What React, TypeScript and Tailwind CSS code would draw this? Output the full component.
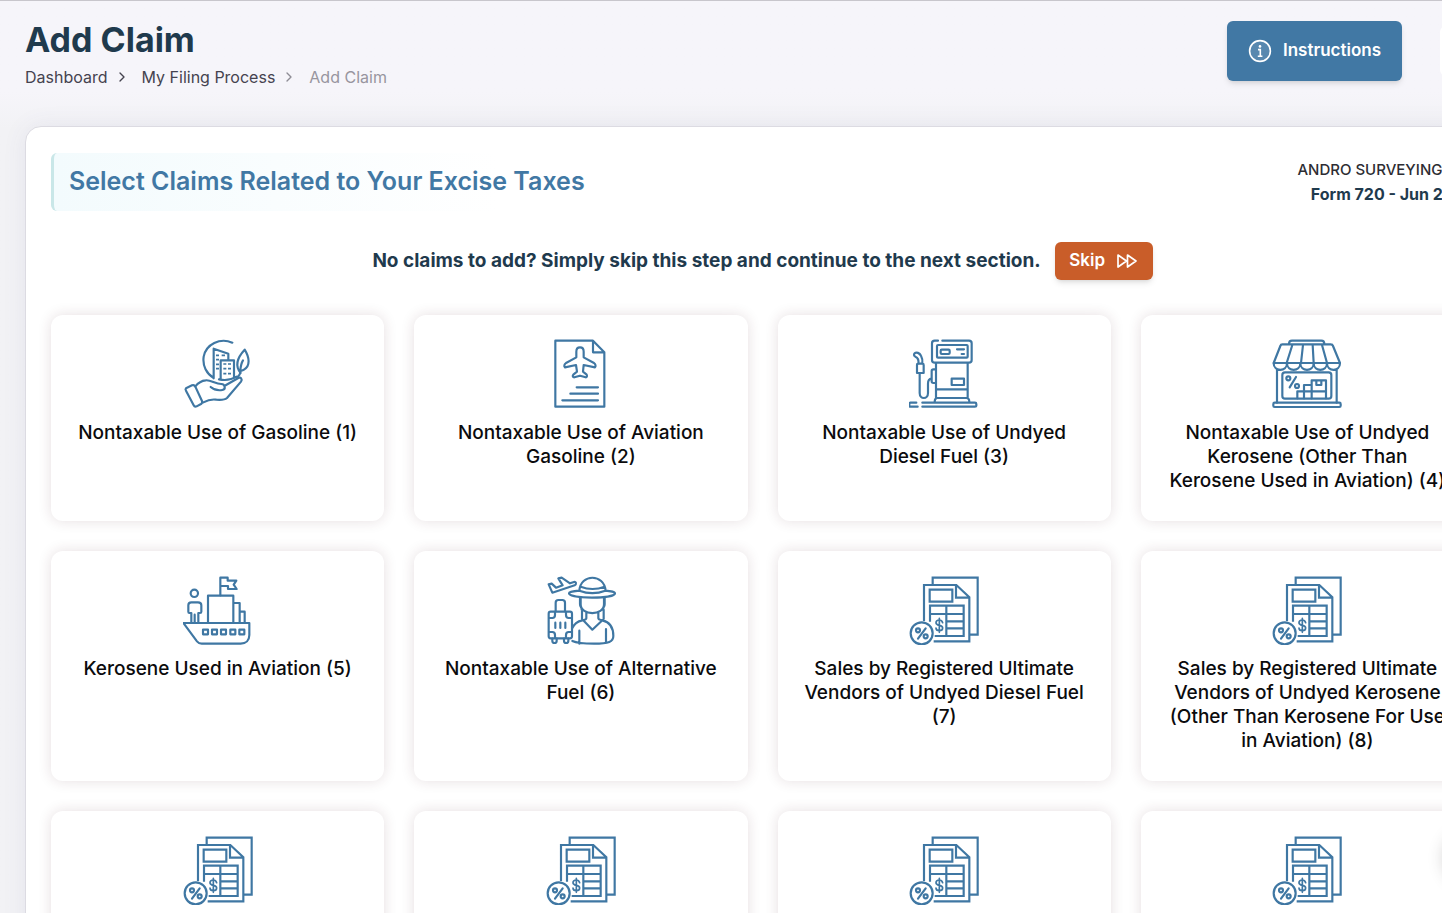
import type { ReactNode } from 'react';
import { ChevronRight } from 'lucide-react';

type Claim = {
    title: string;
    icon: ReactNode;
};

function Icon({ box, children }: { box: string; children: ReactNode }) {
    return (
        <svg
            className="w-[70px] h-[70px] shrink-0"
            viewBox={box}
            fill="none"
            stroke="#3f77a3"
            strokeWidth="6.5"
            strokeLinecap="round"
            strokeLinejoin="round"
            aria-hidden="true"
        >
            {children}
        </svg>
    );
}

const GasolineIcon = (
    <Icon box="39 42 210 210">
        <path d="M187 53C150 37 108 58 101 95c-4 28 9 52 30 64M131 160V71l44 15v16M152 163v-57h40v52M147 163c18 4 38 1 53-8" />
        <path d="M212 144c-15-18-16-40 12-70 15 24 17 49-2 60-4 3-8 3-11 2M211 136c1-12 3-22 8-30M212 138c-1 10-5 15-10 19" />
        <path strokeWidth="5" strokeLinecap="butt" d="M138 91h9M138 104h9M138 118h9M138 131h9M155 91h10M160 117h9M174 117h9M160 131h9M174 131h9M160 146h9M174 146h9" />
        <path d="M48 190l18-9c5-2 8 0 10 4l20 43c2 5 0 7-3 9l-13 7c-4 2-7 1-9-3l-23-44c-2-3-2-5 0-7z" />
        <path d="M76 184c8-10 20-17 31-18 15-2 29 11 47 11 12 1 14 16 3 18-12 2-27-2-35-9M163 183l42-24c7-4 13 4 8 11l-42 49c-7 6-19 6-32 5-14-2-24 0-39 8" />
    </Icon>
);

const AviationIcon = (
    <Icon box="33 42 210 210">
        <path d="M61 47h113l34 35v163H61zM174 48v34h33" />
        <path d="M124 97V80c0-17 22-17 22 0v17l31 17c5 4 6 10 3 13l-34-7-2 20 11 9c2 4 1 8-3 8l-17-5-17 5c-5 0-6-4-3-8l11-9-3-20-33 7c-4-3-2-9 3-13z" />
        <path d="M125 187h64M106 206h83M82 226h107" />
    </Icon>
);

const PumpIcon = (
    <Icon box="43 42 210 210">
        <path d="M130 47h-10c-5 0-8 4-8 8v50c0 5 3 8 8 8h103c5 0 8-3 8-8V55c0-5-3-8-8-8h-80" />
        <rect x="127" y="60" width="92" height="38" rx="3" />
        <rect x="138" y="74" width="27" height="13" rx="3" />
        <path d="M187 73h21M201 87h7M124 115v104M219 115v104M125 193h94M171 161h37v19h-37zM120 231c0-8 2-12 8-12h87c6 0 9 4 9 12" />
        <path d="M65 233H47c-2 0-3 2-3 4v5c0 2 1 3 3 3h22M83 233h158c2 0 4 2 4 4v5c0 2-2 3-4 3H83" />
        <path d="M123 133h-7c-4 0-5 2-5 5v31c0 3 1 5 5 5h7M111 160c-7 1-11 8-11 16v28c0 20-25 20-25 0v-60" />
        <path d="M67 144v-24c0-3 2-4 5-4h11c3 0 4 1 4 4v24zM71 116c2-11-2-18-9-21-5-3-5-7-2-10 5-5 15-1 19 7 4 7 5 15 4 24" />
    </Icon>
);

const StoreIcon = (
    <Icon box="37 42 210 210">
        <path d="M88 57c0-7 3-10 9-10h88c6 0 9 3 9 10M68 58h145c4 0 6 1 7 5l21 51H42l20-51c1-4 2-5 6-5zM98 60L81 114M130 60l-6 54M159 60l3 54M187 60l15 54" />
        <path d="M42 115c0 26 40 26 40 0 0 26 40 26 40 0 0 26 40 26 40 0 0 26 40 26 40 0 0 26 39 26 39 0M52 134v99M231 134v99" />
        <rect x="41" y="233" width="202" height="13" rx="4" />
        <rect x="68" y="142" width="147" height="79" rx="8" />
        <path d="M109 156l-19 31" />
        <circle cx="86" cy="160" r="6" />
        <circle cx="112" cy="183" r="6" />
        <path d="M113 220v-21h20v-19h23v-14h43v54M133 199v21M156 180v40M134 199h65M170 167v13h15v-13" />
    </Icon>
);

const ShipIcon = (
    <Icon box="39 30 210 210">
        <circle cx="73" cy="85" r="11" />
        <path d="M64 173v-29h-6c-2 0-3-2-3-4v-19c0-6 4-9 9-9h20c6 0 10 3 10 9v19c0 2-1 4-4 4h-5v29M74 149v24" />
        <path d="M40 174h198v36c0 16-10 26-26 26H95c-6 0-10-2-14-7zM114 172V92h76v80M191 114h18v58M209 140h15v32" />
        <path d="M151 91V38h22v9h26l-8 12 9 13h-26v-9h-20" />
        <path d="M99 194h15v14H99zM126 194h15v14h-15zM153 194h15v14h-15zM181 194h15v14h-15zM208 194h15v14h-15z" />
    </Icon>
);

const TravelIcon = (
    <Icon box="33 30 210 210">
        <path d="M41 58l9-2 13 12 20-7-13-21 10-2 25 17 12-4c7-2 8 7 2 10L52 83z" />
        <path d="M133 78c3-53 75-53 79 0M137 65c23 9 48 9 72 0M133 77c-17 1-31 5-31 8 0 17 138 17 138 0 0-3-12-7-29-8M133 77c24 9 54 9 78 0" />
        <path d="M137 98v20c0 35 70 35 70 0V98M135 98v20c0 8 5 8 5 16M209 98v20c0 8-5 8-5 16M154 142v18c0 4-6 5-12 6-17 3-25 11-31 25M190 142v18c0 4 5 5 12 6 23 5 33 22 33 47 0 17-13 23-58 23-33 0-53-2-65-8M144 165l28 29 31-29M141 134v28M206 134v28M133 236v-39M213 232v-40" />
        <rect x="41" y="140" width="70" height="80" rx="6" />
        <path d="M62 139v-26c0-5 3-8 8-8h12c5 0 8 3 8 8v26M42 159h10c6 0 8-4 8-9v-9M110 159h-9c-6 0-8-4-8-9v-9M42 201h10c6 0 8 4 8 9v9M110 201h-9c-6 0-8 4-8 9v9M61 173v16M76 173v16M91 173v16M52 221v7c0 8 13 8 13 0v-7M87 221v7c0 8 13 8 13 0v-7" />
    </Icon>
);

const TaxFormIcon = (
    <Icon box="27 30 210 210">
        <path strokeLinejoin="miter" strokeLinecap="butt" d="M98 57V38h135v171h-22M72 168V60h97l39 37v132H101M168 61v37h38M89 74h68v36H89zM90 170v-48h101v91h-87M139 122v91M90 147h100M139 169h52M139 190h52" />
        <circle cx="65" cy="205" r="33" />
        <path d="M77 190l-23 31" />
        <circle cx="54" cy="196" r="6" />
        <circle cx="77" cy="214" r="6" />
        <path strokeWidth="5" d="M128 173c-2-6-6-8-10-8-6 0-10 3-10 8 0 11 20 5 20 16 0 6-5 8-10 8-6 0-10-3-10-8M118 160v42" />
    </Icon>
);

const claims: Claim[] = [
    { title: 'Nontaxable Use of Gasoline (1)', icon: GasolineIcon },
    { title: 'Nontaxable Use of Aviation Gasoline (2)', icon: AviationIcon },
    { title: 'Nontaxable Use of Undyed Diesel Fuel (3)', icon: PumpIcon },
    { title: 'Nontaxable Use of Undyed Kerosene (Other Than Kerosene Used in Aviation) (4)', icon: StoreIcon },
    { title: 'Kerosene Used in Aviation (5)', icon: ShipIcon },
    { title: 'Nontaxable Use of Alternative Fuel (6)', icon: TravelIcon },
    { title: 'Sales by Registered Ultimate Vendors of Undyed Diesel Fuel (7)', icon: TaxFormIcon },
    { title: 'Sales by Registered Ultimate Vendors of Undyed Kerosene (Other Than Kerosene For Use in Aviation) (8)', icon: TaxFormIcon },
    { title: 'Sales by Registered Ultimate Vendors of Kerosene (9)', icon: TaxFormIcon },
    { title: 'Sales by Registered Ultimate Vendors of Gasoline (10)', icon: TaxFormIcon },
    { title: 'Sales by Registered Ultimate Vendors of Aviation Gasoline (11)', icon: TaxFormIcon },
    { title: 'Biodiesel or Renewable Diesel Mixture Credit (12)', icon: TaxFormIcon },
];

function Header() {
    return (
        <header className="flex items-start justify-between pt-5">
            <div>
                <h1 className="text-[34px] leading-[38px] font-bold text-[#1f3a4d]">Add Claim</h1>
                <nav aria-label="Breadcrumb" className="mt-1.5">
                    <ol className="flex items-center gap-1.5 text-base leading-6 text-[#45434f]">
                        <li><a href="#">Dashboard</a></li>
                        <li><ChevronRight className="size-4 mr-1.5" aria-hidden="true" /></li>
                        <li><a href="#">My Filing Process</a></li>
                        <li><ChevronRight className="size-4 mr-1.5 text-[#8e8c95]" aria-hidden="true" /></li>
                        <li className="text-[#98969f]" aria-current="page">Add Claim</li>
                    </ol>
                </nav>
            </div>
            <div className="flex items-center gap-[38px]">
                <button className="flex items-center justify-center gap-[11px] w-[175px] h-[60px] rounded-md bg-[#4178a4] text-[17px] font-semibold text-white shadow-md">
                    <svg className="size-6" viewBox="0 0 24 24" fill="none" stroke="currentColor" strokeWidth="1.6" aria-hidden="true">
                        <circle cx="12" cy="12" r="10.4" fill="#ffffff" fillOpacity="0.12" />
                        <circle cx="12" cy="7.4" r="1.3" fill="currentColor" stroke="none" />
                        <path d="M10 10.6h2.3v6.6M9.8 17.2h4.6" />
                    </svg>
                    Instructions
                </button>
                <button aria-label="Menu" className="w-[60px] h-[50px] rounded-md bg-white" />
            </div>
        </header>
    );
}

function ClaimCard({ title, icon }: Claim) {
    return (
        <button className="flex flex-col items-center justify-start px-6 pt-6 pb-7 rounded-xl bg-white text-center shadow-[0_0_14px_rgba(80,30,45,0.14)]">
            {icon}
            <span className="mt-3 text-[19px] leading-6 font-medium text-[#0b0b0d]">{title}</span>
        </button>
    );
}

export default function App() {
    return (
        <div className="h-screen overflow-hidden border-t border-[#c8c6cc] bg-linear-to-b from-[#f6f5fa] from-10% to-[#f2f2f5] to-14% font-['Inter',sans-serif]">
            {/* content runs wider than the window */}
            <div className="w-[calc(100%+58px)] pl-[25px]">
                <Header />
                <main className="mt-[37px] rounded-2xl border border-[#dcdbe2] bg-white px-[25px] pt-[26px] pb-8 shadow-[0_0_24px_rgba(80,80,140,0.08)]">
                    <div className="flex items-center justify-between">
                        <h2 className="h-[58px] flex items-center pl-[15px] pr-6 rounded-md border-l-3 border-[#c9e7e8] bg-linear-to-r from-[#f3fbfd] to-white to-80% text-[25px] font-semibold text-[#4178a4]">
                            Select Claims Related to Your Excise Taxes
                        </h2>
                        <div className="text-right leading-6">
                            <p className="text-[15px] font-medium text-[#2d2d33]">ANDRO SURVEYING LLC</p>
                            <p className="text-base font-bold text-[#1f3a4d]">Form 720 - Jun 2025</p>
                        </div>
                    </div>

                    <div className="mt-[31px] flex items-center justify-center gap-[14px]">
                        <p className="text-[19px] font-bold text-[#1f3a4d]">
                            No claims to add? Simply skip this step and continue to the next section.
                        </p>
                        <button className="flex items-center justify-center gap-[11px] w-[98px] h-[38px] rounded-md bg-[#c95d29] text-[17px] font-semibold text-white shadow-md">
                            Skip
                            <svg className="w-[22px] h-4" viewBox="0 0 22 16" fill="none" stroke="currentColor" strokeWidth="1.7" strokeLinejoin="round" aria-hidden="true">
                                <path d="M2 2l8.500 6L2 14zM11.500 2l8.500 6-8.500 6z" />
                            </svg>
                        </button>
                    </div>

                    <div className="mt-[35px] grid grid-cols-4 gap-[30px]">
                        {claims.map((claim) => (
                            <ClaimCard key={claim.title} {...claim} />
                        ))}
                    </div>
                </main>
            </div>
            <button aria-label="Help" className="fixed bottom-7 -right-14 size-[54px] rounded-full bg-white shadow-[0_0_16px_rgba(60,50,50,0.25)]" />
        </div>
    );
}
